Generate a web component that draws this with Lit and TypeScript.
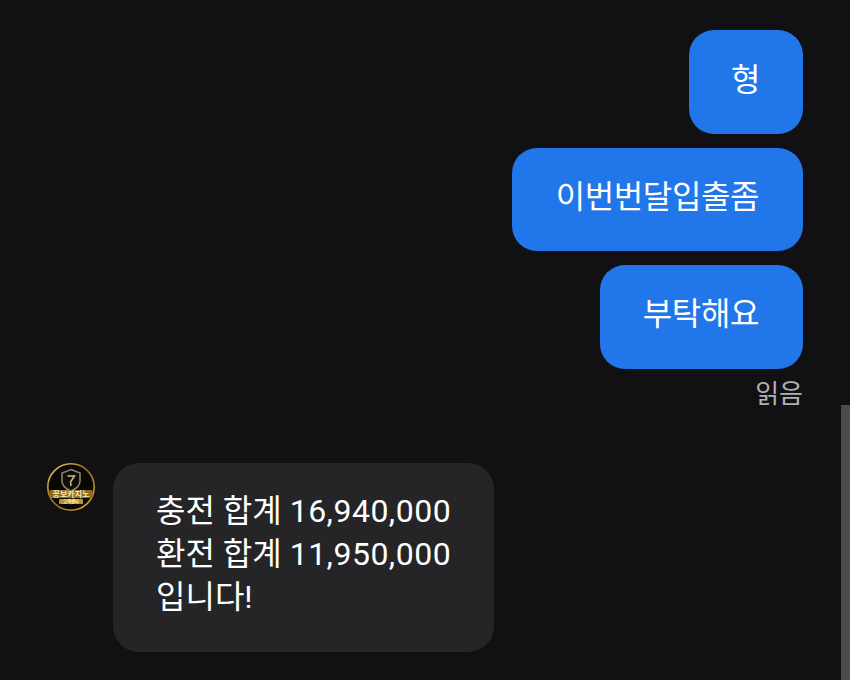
import { LitElement, html, css } from "lit";
import { customElement } from "lit/decorators.js";

@customElement("app-root")
export class AppRoot extends LitElement {
  static styles = css`
    :host {
      display: block;
      position: relative;
      width: 850px;
      height: 680px;
      overflow: hidden;
      background: #111113;
      font-family: Roboto, "Noto Sans CJK KR", sans-serif;
      color: #fff;
    }
    .page {
      display: flex;
      flex-direction: column;
      padding: 30px 47px 0;
    }
    .sent {
      display: flex;
      flex-direction: column;
      align-items: flex-end;
      gap: 14px;
    }
    .bubble {
      font-size: 32px;
      line-height: 43px;
      box-sizing: border-box;
      border-radius: 25px;
    }
    .me {
      background: #2176ea;
      height: 103.5px;
      padding-right: 44px;
      text-align: right;
      letter-spacing: -0.4px;
      white-space: nowrap;
    }
    .one {
      width: 114px;
      padding-top: 29px;
      padding-right: 43px;
    }
    .two {
      width: 291px;
      padding-top: 28px;
    }
    .three {
      width: 203px;
      padding-top: 28px;
    }
    .read {
      align-self: flex-end;
      margin-top: 10px;
      font-size: 26px;
      line-height: 30px;
      color: #b0b0b2;
    }
    .recv {
      display: flex;
      align-items: flex-start;
      gap: 18px;
      margin-top: 54px;
    }
    .avatar {
      width: 48px;
      height: 48px;
      flex: none;
      display: block;
    }
    .them {
      width: 381px;
      height: 189px;
      padding: 27px 43px;
      background: #252527;
      border-radius: 26px;
      white-space: nowrap;
    }
    .num {
      letter-spacing: 0.5px;
    }
    .scroll {
      position: absolute;
      right: 0;
      top: 405px;
      bottom: 0;
      width: 9px;
      background: #4b4b4c;
    }
    .tiny {
      font-family: "Noto Sans CJK KR", sans-serif;
      font-weight: 700;
    }
  `;

  render() {
    return html`
      <div class="page">
        <div class="sent">
          <div class="bubble me one">형</div>
          <div class="bubble me two">이번번달입출좀</div>
          <div class="bubble me three">부탁해요</div>
        </div>
        <div class="read">읽음</div>
        <div class="recv">
          <svg class="avatar" viewBox="0 0 48 48">
            <defs>
              <linearGradient id="g" x1="0" y1="0" x2="1" y2="1">
                <stop offset="0" stop-color="#e8cb68" />
                <stop offset="0.5" stop-color="#8f6c1c" />
                <stop offset="1" stop-color="#e0b53f" />
              </linearGradient>
            </defs>
            <circle cx="24" cy="24" r="23.2" fill="#080704" stroke="url(#g)" stroke-width="1.6" />
            <path
              d="M24 6.5 L33 10 V18 C33 23 29 26 24 28 C19 26 15 23 15 18 V10 Z"
              fill="#100e08"
              stroke="#8e8468"
              stroke-width="1.6"
            />
            <path d="M20.5 13 H27.5 L23.5 19 L24 23" fill="none" stroke="#c9bc92" stroke-width="1.5" />
            <rect x="2.5" y="27" width="43" height="8" fill="#8f6c1c" />
            <text class="tiny" x="24" y="33.8" text-anchor="middle" font-size="8" fill="#f8ebb8">꽁보카지노</text>
            <rect x="12" y="36" width="24" height="5" rx="1" fill="#b8912a" />
            <text class="tiny" x="24" y="40.2" text-anchor="middle" font-size="4.2" fill="#fff4c8">고객센터</text>
          </svg>
          <div class="bubble them">
            충전 합계 <span class="num">16,940,000</span><br />환전 합계 <span class="num">11,950,000</span><br />입니다!
          </div>
        </div>
      </div>
      <div class="scroll"></div>
    `;
  }
}
